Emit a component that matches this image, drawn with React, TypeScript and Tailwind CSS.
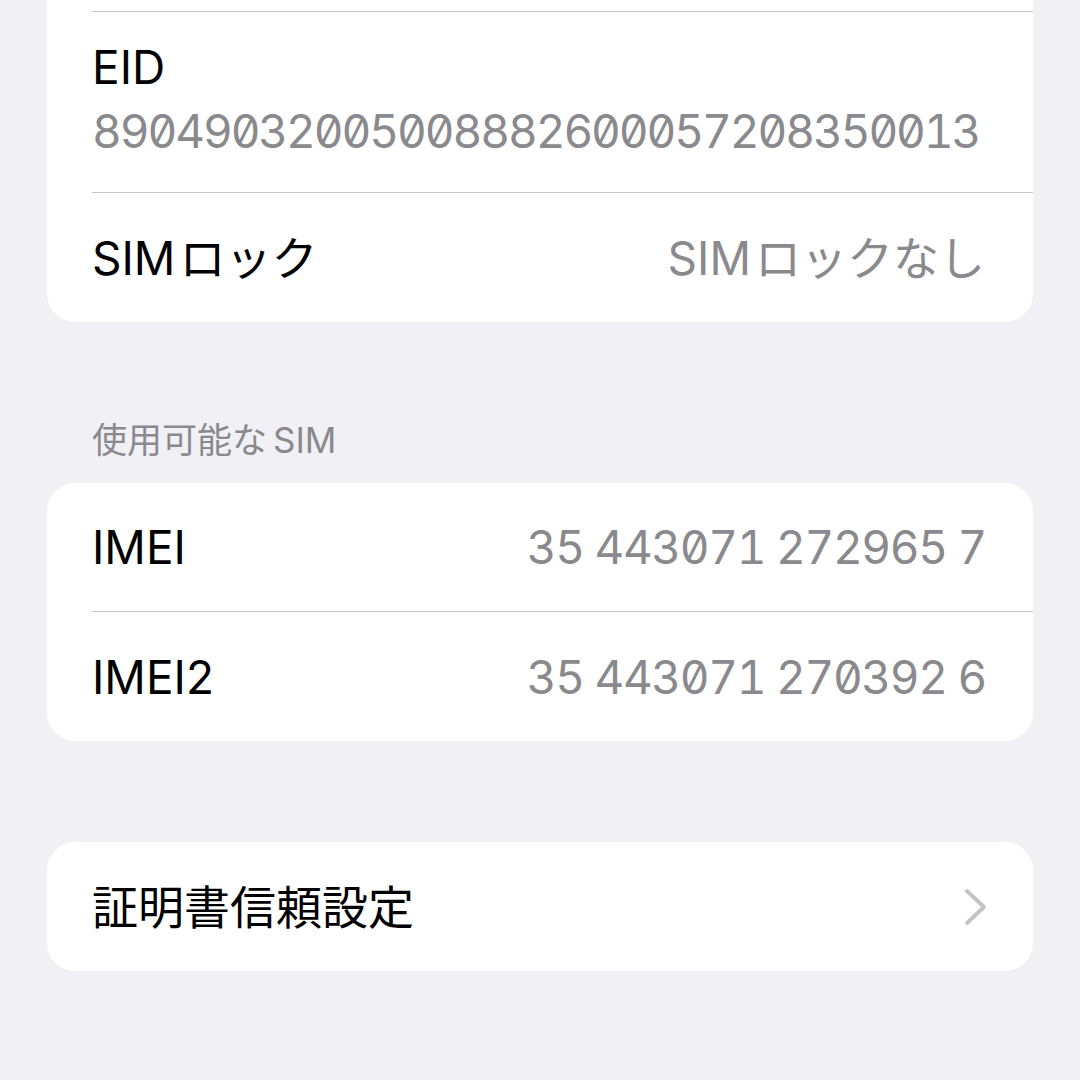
const font = "font-['Inter','Noto_Sans_CJK_JP',sans-serif]"

function Separator() {
  return <div className="ml-[45px] h-px bg-[#c6c6c9]" />
}

function ValueRow({ label, value }: { label: string; value: string }) {
  return (
    <div className="flex h-[128px] items-center justify-between pl-[45px] pr-[47px]">
      <span className="text-[46px] leading-none text-black">{label}</span>
      <span className="text-[46px] leading-none text-[#8a8a8e] tabular-nums slashed-zero tracking-[-1.4px]">
        {value}
      </span>
    </div>
  )
}

function Chevron() {
  return (
    <svg width="24" height="38" viewBox="0 0 24 38" fill="none" className="text-[#c4c4c7]">
      <path d="M3 3 L20 19 L3 35" stroke="currentColor" strokeWidth="4" strokeLinecap="round" strokeLinejoin="round" />
    </svg>
  )
}

export default function App() {
  return (
    <div className={`${font} min-h-[1080px] w-[1080px] bg-[#f0f0f5] px-[47px]`}>
      {/* carrier info card, scrolled so that only its tail shows */}
      <div className="overflow-hidden rounded-b-[28px] bg-white">
        <div className="h-[11px]" />
        <Separator />
        <div className="flex h-[180px] flex-col pl-[45px] pt-[23px]">
          <span className="text-[46px] leading-[64px] text-black">EID</span>
          <span className="whitespace-nowrap text-[46px] leading-[64px] text-[#8a8a8e] tabular-nums slashed-zero tracking-[-2.1px]">
            89049032005008882600057208350013
          </span>
        </div>
        <Separator />
        <div className="flex h-[129px] items-center justify-between pl-[45px] pr-[48px]">
          <span className="text-[46px] leading-none text-black">
            SIM<span className="ml-[4px]">ロック</span>
          </span>
          <span className="text-[46px] leading-none text-[#8a8a8e]">
            SIM<span className="ml-[4px]">ロックなし</span>
          </span>
        </div>
      </div>

      <div className="pl-[45px] pt-[98px] pb-[23px]">
        <span className="block text-[35px] leading-[40px] text-[#8a8a8e]">
          使用可能な<span className="ml-[6px]">SIM</span>
        </span>
      </div>

      <div className="overflow-hidden rounded-[28px] bg-white">
        <ValueRow label="IMEI" value="35 443071 272965 7" />
        <Separator />
        <div className="pt-px">
          <ValueRow label="IMEI2" value="35 443071 270392 6" />
        </div>
      </div>

      <div className="mt-[101px] flex h-[129px] items-center justify-between rounded-[28px] bg-white pl-[45px] pr-[45px]">
        <span className="text-[46px] leading-none text-black">証明書信頼設定</span>
        <Chevron />
      </div>
    </div>
  )
}
